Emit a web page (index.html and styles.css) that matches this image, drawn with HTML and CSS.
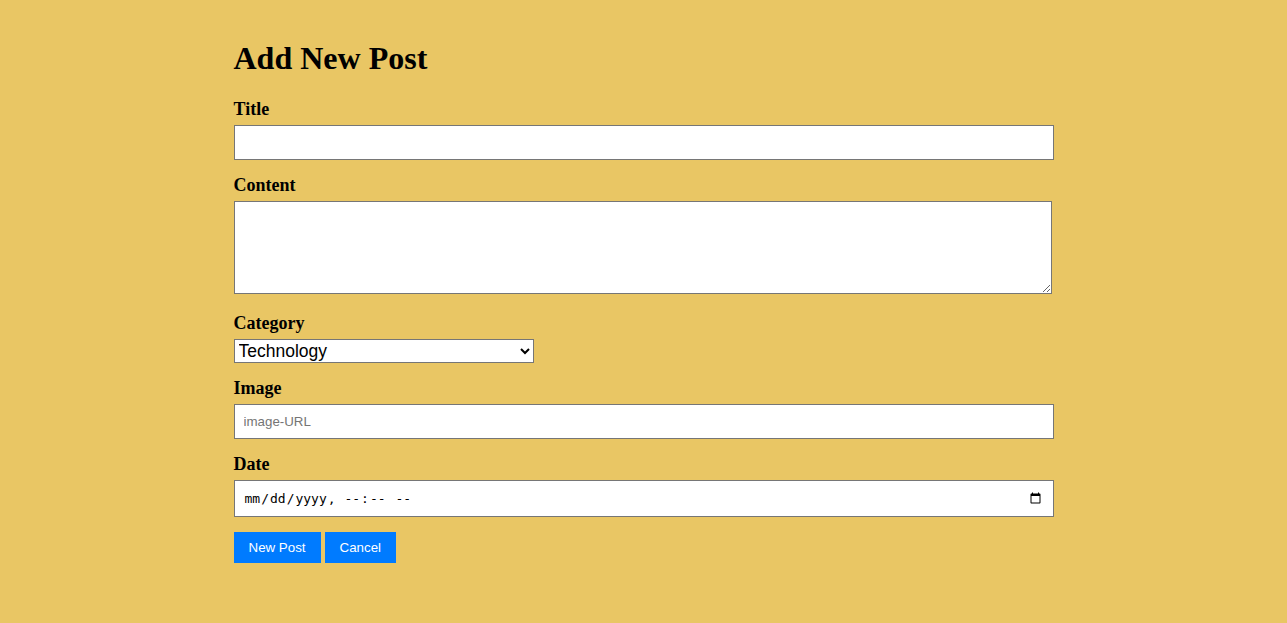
FILE: index.html
```html
<!DOCTYPE html>
<html lang="en">
<head>
<meta charset="utf-8">
<title>Add New Post</title>
<link rel="stylesheet" href="styles.css">
</head>
<body>
<div class="container">
  <h1 class="page-title">Add New Post</h1>
  <form class="post-form">
    <div class="field">
      <label class="field-label" for="title">Title</label>
      <input class="text-input" type="text" id="title">
    </div>
    <div class="field">
      <label class="field-label" for="content">Content</label>
      <textarea class="text-area" id="content"></textarea>
    </div>
    <div class="field">
      <label class="field-label" for="category">Category</label>
      <select class="select-input" id="category">
        <option>Technology</option>
        <option>Lifestyle</option>
        <option>Travel</option>
      </select>
    </div>
    <div class="field">
      <label class="field-label" for="image">Image</label>
      <input class="text-input" type="text" id="image" placeholder="image-URL">
    </div>
    <div class="field">
      <label class="field-label" for="date">Date</label>
      <input class="text-input date-input" type="datetime-local" id="date">
    </div>
    <div class="actions">
      <button class="btn" type="submit">New Post</button>
      <button class="btn" type="button">Cancel</button>
    </div>
  </form>
</div>
</body>
</html>
```

FILE: styles.css
```css
html, body {
  margin: 0;
  padding: 0;
}

body {
  background: #e9c664;
  font-family: "Liberation Serif", "Times New Roman", serif;
  color: #000;
}

.container {
  width: 820px;
  margin: 0 auto;
  padding-top: 19px;
}

.page-title {
  font-size: 32px;
  font-weight: bold;
  margin: 21.44px 0;
}

.field {
  margin-bottom: 15px;
}

.field-label {
  display: block;
  font-size: 18px;
  font-weight: bold;
  margin-bottom: 5px;
}

.text-input {
  display: block;
  box-sizing: border-box;
  width: 820px;
  height: 35px;
  padding: 0 9px;
  border: 1px solid #767676;
  border-radius: 0;
  background: #fff;
  font-family: "Liberation Sans", Arial, sans-serif;
  font-size: 13.33px;
  color: #000;
}

.text-input::placeholder {
  color: #757575;
}

.date-input {
  height: 37px;
  font-family: "DejaVu Sans Mono", "Liberation Mono", monospace;
  font-size: 13px;
}

.text-area {
  box-sizing: border-box;
  width: 818px;
  height: 93px;
  border: 1px solid #767676;
  border-radius: 0;
  background: #fff;
  font-family: "Liberation Mono", monospace;
  font-size: 13.33px;
}

.select-input {
  box-sizing: border-box;
  width: 300px;
  height: 24px;
  border: 1px solid #767676;
  border-radius: 0;
  background: #fff;
  font-family: "Liberation Sans", Arial, sans-serif;
  font-size: 17.5px;
  color: #000;
}

.actions {
  display: flex;
  gap: 4px;
}

.btn {
  background: #007bff;
  color: #fff;
  border: none;
  border-radius: 0;
  padding: 8px 15px;
  font-family: "Liberation Sans", Arial, sans-serif;
  font-size: 13.33px;
  line-height: 15px;
  cursor: pointer;
}
```
